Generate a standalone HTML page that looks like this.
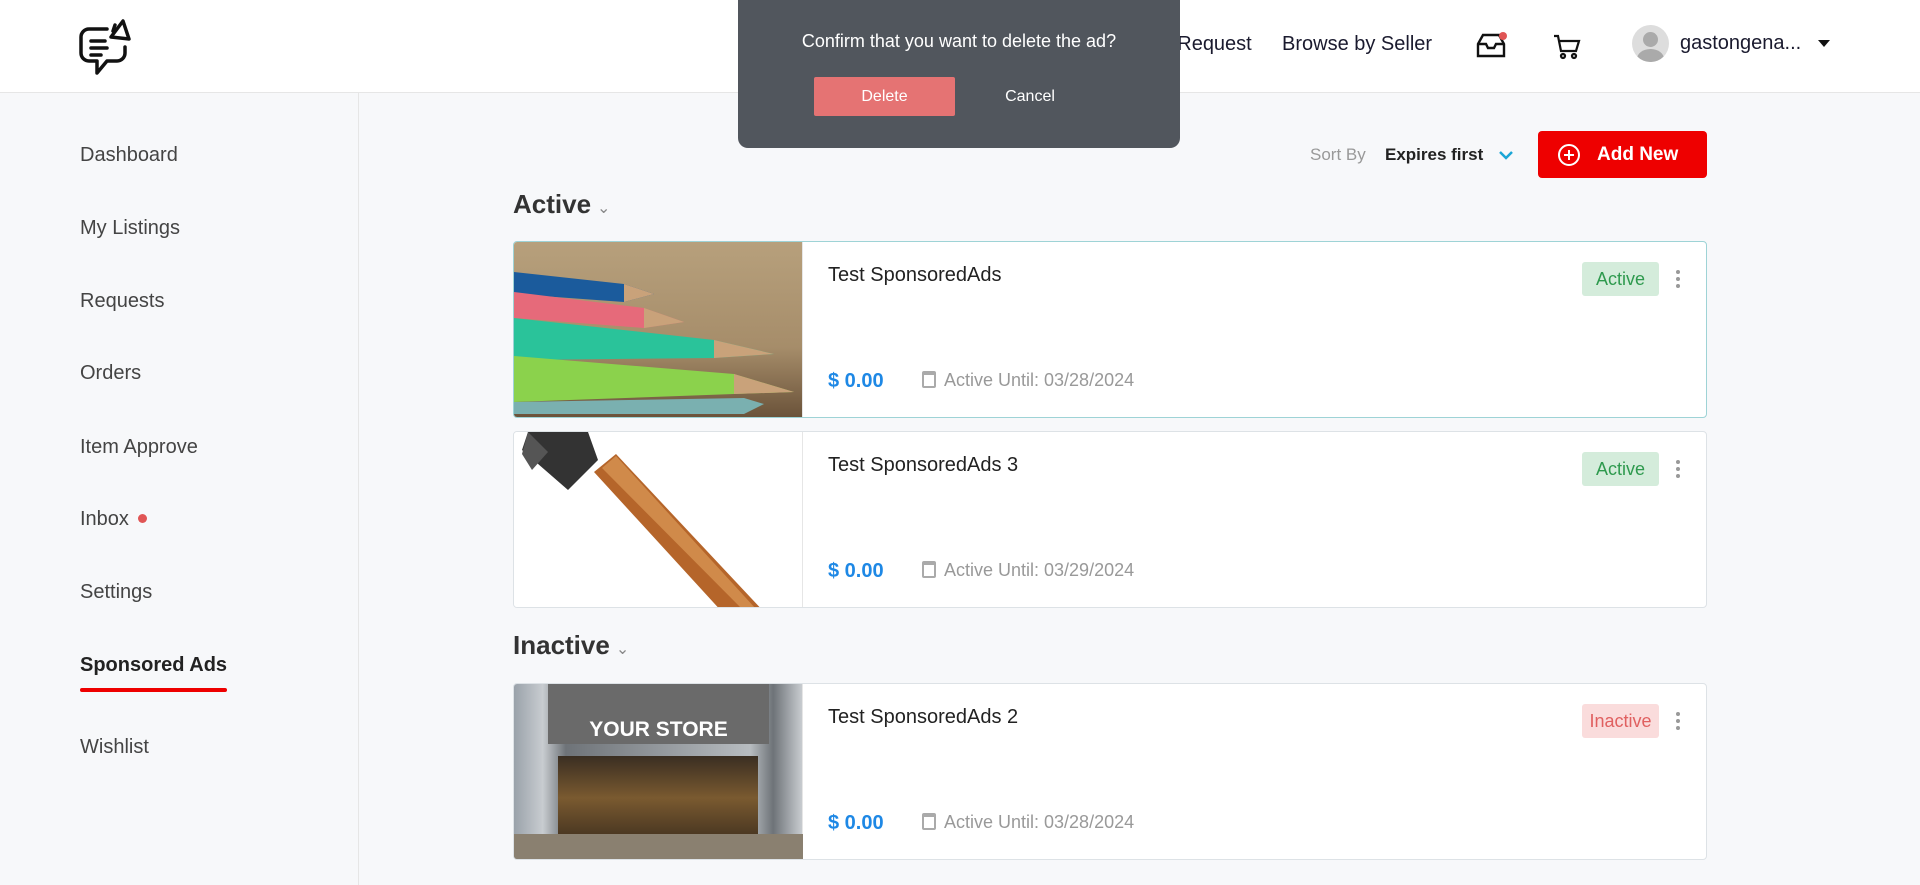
<!DOCTYPE html>
<html><head><meta charset="utf-8"><style>
*{margin:0;padding:0;box-sizing:border-box}
body{width:1920px;height:885px;overflow:hidden;background:#f7f8fa;font-family:"Liberation Sans",sans-serif;position:relative;color:#333}
.hdr{position:absolute;left:0;top:0;width:1920px;height:93px;background:#fff;border-bottom:1px solid #e6e6e6}
.nav{position:absolute;top:33px;font-size:20px;color:#1a1a2e}
.side{position:absolute;left:0;top:93px;width:359px;height:792px;border-right:1px solid #e6e6e6;background:#f7f8fa}
.si{position:absolute;left:80px;font-size:20px;color:#444}
.dlg{position:absolute;left:738px;top:0;width:442px;height:148px;background:#51565d;border-radius:0 0 10px 10px;z-index:5;color:#fff}
.card{position:absolute;left:513px;width:1194px;height:177px;background:#fff;border:1px solid #dde2e6;border-radius:4px;overflow:hidden}
.img{position:absolute;left:0;top:0;width:289px;height:100%;border-right:1px solid #e6e6e6}
.ttl{position:absolute;left:314px;top:22px;font-size:20px;color:#222}
.price{position:absolute;left:314px;top:128px;font-size:20px;font-weight:bold;color:#1e88e5}
.until{position:absolute;left:408px;top:128px;font-size:18px;color:#999}
.until i{display:inline-block;width:14px;height:17px;border:2px solid #aaa;border-top-width:4px;border-radius:2px;vertical-align:-2px;margin-right:8px}
.badge{position:absolute;left:1068px;top:20px;width:77px;height:34px;border-radius:3px;font-size:18px;text-align:center;line-height:34px}
.dots{position:absolute;left:1162px;top:28px;width:4px}
.dots b{display:block;width:4px;height:4px;border-radius:2px;background:#999;margin-bottom:3px}
.h{position:absolute;left:513px;font-size:26px;font-weight:bold;color:#333}
.h span{font-size:16px;color:#888;font-weight:normal;margin-left:6px}
</style></head><body>
<div class="hdr">
<svg style="position:absolute;left:77px;top:15px" width="62" height="64" viewBox="0 0 62 64" fill="none" stroke="#111" stroke-width="3.5" stroke-linejoin="round" stroke-linecap="round">
<path d="M30 14H12a8 8 0 0 0-8 8v16a8 8 0 0 0 8 8h8v12l10-12h10a8 8 0 0 0 8-8v-6"/>
<path d="M14 26h14M14 33h16M14 40h10"/>
<path d="M34 22l12-16 6 18z"/><path d="M38 10l-2 6"/>
</svg>
<div class="nav" style="left:925px;color:#333">Browse Listings</div>
<div class="nav" style="left:1105px">Browse Request</div>
<div class="nav" style="left:1282px">Browse by Seller</div>
<svg style="position:absolute;left:1475px;top:32px" width="32" height="28" viewBox="0 0 32 28" fill="none" stroke="#111" stroke-width="2.4"><path d="M3 12l5-9h16l5 9v12H3z"/><path d="M3 12h8l2 4h6l2-4h8"/><circle cx="28" cy="4" r="4" fill="#e05555" stroke="none"/></svg>
<svg style="position:absolute;left:1553px;top:33px" width="28" height="28" viewBox="0 0 28 28" fill="none" stroke="#111" stroke-width="2.2"><path d="M1 3h4l3 15h15l3-10H7"/><circle cx="10" cy="23" r="2"/><circle cx="21" cy="23" r="2"/></svg>
<div style="position:absolute;left:1632px;top:25px;width:37px;height:37px;border-radius:50%;background:#ddd;overflow:hidden"><div style="position:absolute;left:11px;top:7px;width:15px;height:15px;border-radius:50%;background:#aaa"></div><div style="position:absolute;left:5px;top:24px;width:27px;height:20px;border-radius:50%;background:#aaa"></div></div>
<div class="nav" style="left:1680px;top:32px">gastongena...</div>
<div style="position:absolute;left:1818px;top:40px;border:6px solid transparent;border-top:7px solid #111"></div>
</div>
<div class="dlg">
<div style="position:absolute;left:0;width:100%;top:31px;text-align:center;font-size:18px">Confirm that you want to delete the ad?</div>
<div style="position:absolute;left:76px;top:77px;width:141px;height:39px;background:#e57373;border-radius:2px;text-align:center;line-height:39px;font-size:16px">Delete</div>
<div style="position:absolute;left:242px;top:77px;width:100px;line-height:39px;text-align:center;font-size:16px">Cancel</div>
</div>
<div class="side">
<div class="si" style="top:51px">Dashboard</div>
<div class="si" style="top:124px">My Listings</div>
<div class="si" style="top:197px">Requests</div>
<div class="si" style="top:269px">Orders</div>
<div class="si" style="top:343px">Item Approve</div>
<div class="si" style="top:415px">Inbox <span style="display:inline-block;width:9px;height:9px;border-radius:50%;background:#e05555;vertical-align:2px;margin-left:4px"></span></div>
<div class="si" style="top:488px">Settings</div>
<div class="si" style="top:561px;font-weight:bold;color:#222">Sponsored Ads</div>
<div style="position:absolute;left:80px;top:595px;width:147px;height:4px;background:#e00;border-radius:2px"></div>
<div class="si" style="top:643px">Wishlist</div>
</div>
<div style="position:absolute;left:1310px;top:145px;font-size:17px;color:#999">Sort By</div>
<div style="position:absolute;left:1385px;top:145px;font-size:17px;font-weight:bold;color:#222">Expires first</div>
<svg style="position:absolute;left:1498px;top:150px" width="16" height="10" viewBox="0 0 16 10"><path d="M2 2l6 6 6-6" fill="none" stroke="#1aa6d6" stroke-width="2.5"/></svg>
<div style="position:absolute;left:1538px;top:131px;width:169px;height:47px;background:#ee0000;border-radius:4px;color:#fff;font-size:19px;font-weight:bold;line-height:47px;padding-left:59px">Add New</div>
<svg style="position:absolute;left:1557px;top:143px" width="24" height="24" viewBox="0 0 24 24" fill="none" stroke="#fff" stroke-width="2"><circle cx="12" cy="12" r="10"/><path d="M12 7v10M7 12h10"/></svg>
<div class="h" style="top:189px">Active<span>⌄</span></div>
<div class="card" style="top:241px;border-color:#9ed3d6">
<div class="img" style="background:linear-gradient(180deg,#b7a07c,#a68d6a 60%,#6b533a)"><svg width="289" height="177" viewBox="0 0 289 177"><path d="M0 30l110 12 30 10-30 8L0 52z" fill="#1b5b9c"/><path d="M0 50l130 16 40 14-40 6L0 76z" fill="#e66a7a"/><path d="M0 76l200 22 60 14-60 4L0 118z" fill="#2ac39a"/><path d="M0 114l220 18 60 18-60 2L0 160z" fill="#8bd24c"/><path d="M0 160l230 -4 20 6-20 10L0 172z" fill="#7ab0b0"/><path d="M110 42l30 10-30 8zM130 66l40 14-40 6zM200 98l60 14-60 4zM220 132l60 18-60 2z" fill="#c9a27a"/></svg></div>
<div class="ttl">Test SponsoredAds</div><div class="price">$ 0.00</div><div class="until"><i></i>Active Until: 03/28/2024</div>
<div class="badge" style="background:#d4ecdb;color:#2e9a4e">Active</div><div class="dots"><b></b><b></b><b></b></div></div>
<div class="card" style="top:431px">
<div class="img" style="background:#fff"><svg width="289" height="177" viewBox="0 0 289 177"><path d="M80 40l22-18 150 160h-42z" fill="#b5652a"/><path d="M88 36l14-12 140 153h-14z" fill="#d08a4a"/><path d="M14 0h60l10 28-30 30-46-40z" fill="#333"/><path d="M14 0l20 20-16 18-10-16z" fill="#555"/></svg></div>
<div class="ttl">Test SponsoredAds 3</div><div class="price">$ 0.00</div><div class="until"><i></i>Active Until: 03/29/2024</div>
<div class="badge" style="background:#d4ecdb;color:#2e9a4e">Active</div><div class="dots"><b></b><b></b><b></b></div></div>
<div class="h" style="top:630px">Inactive<span>⌄</span></div>
<div class="card" style="top:683px">
<div class="img" style="background:linear-gradient(90deg,#9aa2aa,#c8ccd0 10%,#6e7378 18%,#b7bcc0 82%,#6e7378 90%,#c8ccd0)"><div style="position:absolute;left:34px;top:0;width:221px;height:60px;background:#6a6a6a"></div><div style="position:absolute;left:0;top:34px;width:289px;text-align:center;color:#fff;font-weight:bold;font-size:21px">YOUR STORE</div><div style="position:absolute;left:44px;top:72px;width:200px;height:105px;background:linear-gradient(180deg,#3a2e22,#7a5a30 40%,#2a2018)"></div><div style="position:absolute;left:0;top:150px;width:289px;height:27px;background:#8a8070"></div></div>
<div class="ttl">Test SponsoredAds 2</div><div class="price">$ 0.00</div><div class="until"><i></i>Active Until: 03/28/2024</div>
<div class="badge" style="background:#fadcdc;color:#e06060">Inactive</div><div class="dots"><b></b><b></b><b></b></div></div>
</body></html>
